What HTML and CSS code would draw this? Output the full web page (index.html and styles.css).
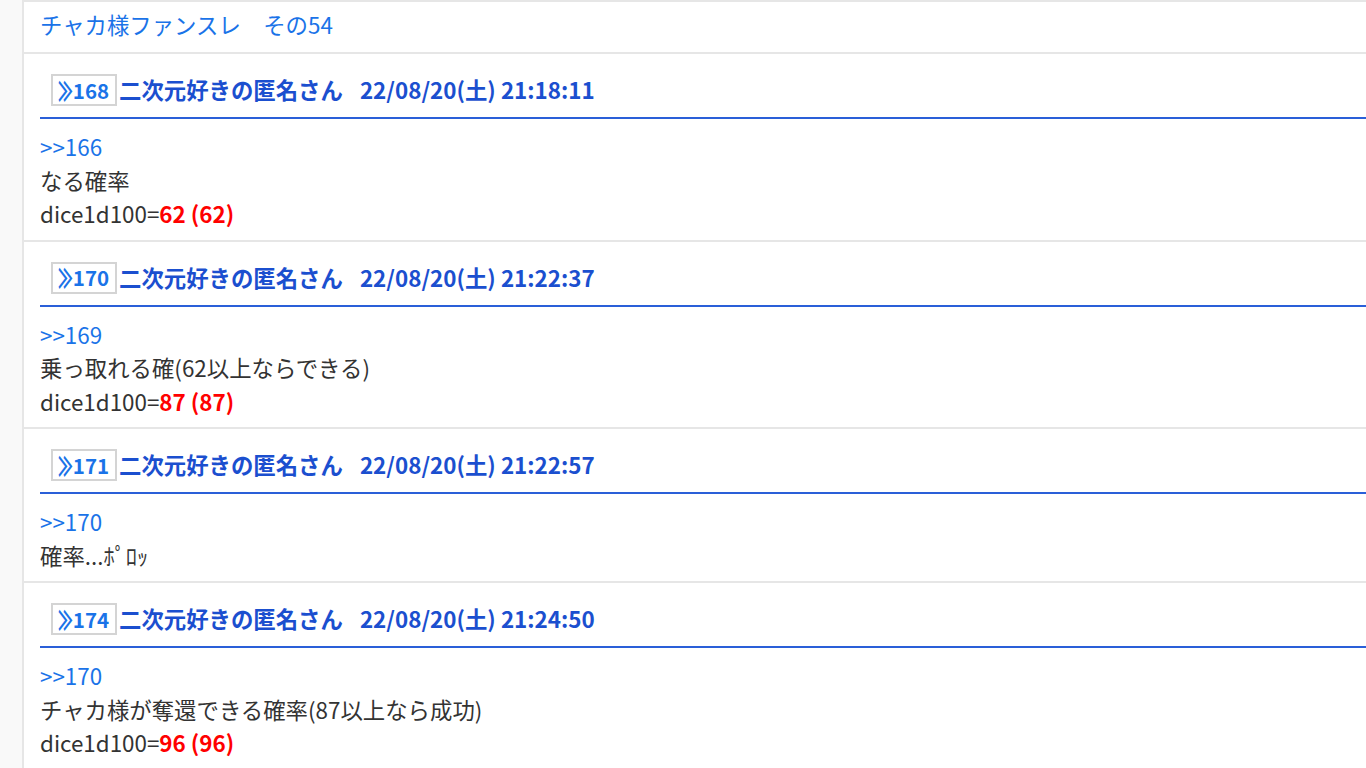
FILE: index.html
```html
<!DOCTYPE html>
<html lang="ja">
<head>
<meta charset="utf-8">
<link rel="stylesheet" href="styles.css">
</head>
<body>
<div class="page">
  <div class="thread">
    <h1 class="title">チャカ様ファンスレ　その54</h1>

    <div class="post">
      <div class="post-head"><span class="num"><span class="chev">≫</span>168</span><span class="name">二次元好きの匿名さん</span><span class="date">22/08/20(土) 21:18:11</span></div>
      <div class="post-body">
        <div class="line"><span class="anchor">&gt;&gt;166</span></div>
        <div class="line">なる確率</div>
        <div class="line">dice1d100=<span class="dice">62 (62)</span></div>
      </div>
    </div>

    <div class="post">
      <div class="post-head"><span class="num"><span class="chev">≫</span>170</span><span class="name">二次元好きの匿名さん</span><span class="date">22/08/20(土) 21:22:37</span></div>
      <div class="post-body">
        <div class="line"><span class="anchor">&gt;&gt;169</span></div>
        <div class="line">乗っ取れる確(62以上ならできる)</div>
        <div class="line">dice1d100=<span class="dice">87 (87)</span></div>
      </div>
    </div>

    <div class="post">
      <div class="post-head"><span class="num"><span class="chev">≫</span>171</span><span class="name">二次元好きの匿名さん</span><span class="date">22/08/20(土) 21:22:57</span></div>
      <div class="post-body">
        <div class="line"><span class="anchor">&gt;&gt;170</span></div>
        <div class="line">確率...ﾎﾟﾛｯ</div>
      </div>
    </div>

    <div class="post">
      <div class="post-head"><span class="num"><span class="chev">≫</span>174</span><span class="name">二次元好きの匿名さん</span><span class="date">22/08/20(土) 21:24:50</span></div>
      <div class="post-body">
        <div class="line"><span class="anchor">&gt;&gt;170</span></div>
        <div class="line">チャカ様が奪還できる確率(87以上なら成功)</div>
        <div class="line">dice1d100=<span class="dice">96 (96)</span></div>
      </div>
    </div>
  </div>
</div>
</body>
</html>
```

FILE: styles.css
```css
* { box-sizing: border-box; }
html, body {
  margin: 0;
  padding: 0;
  background: #f9f9f9;
  font-family: "Noto Sans CJK JP", "Noto Sans", sans-serif;
  color: #333;
  overflow: hidden;
}
.page {
  padding-left: 22px;
}
.thread {
  background: #fff;
  border-left: 2px solid #e6e6e6;
  border-top: 2px solid #e6e6e6;
  min-height: 768px;
}
.title {
  margin: 0;
  font-size: 22.4px;
  font-weight: normal;
  color: #1a73e8;
  line-height: 33px;
  padding: 6px 16px 9px 16px;
  border-bottom: 2px solid #e6e6e6;
  height: 52px;
}
.post {
  padding-left: 16px;
  border-bottom: 2px solid #e6e6e6;
}
.post-head {
  display: flex;
  align-items: center;
  height: 65px;
  padding: 20px 0 11px 11px;
  border-bottom: 2px solid #2a5fd8;
  font-weight: bold;
  color: #1b4fcf;
  font-size: 22.4px;
  line-height: 28px;
  white-space: nowrap;
}
.name, .date {
  padding-bottom: 2px;
}
.num {
  display: inline-flex;
  align-items: center;
  justify-content: center;
  height: 32px;
  width: 66px;
  border: 2px solid #d4d4d4;
  color: #1a73e8;
  font-size: 20.5px;
  margin-right: 2px;
  padding-bottom: 1px;
}
.chev {
  display: inline-block;
  transform: scale(0.68, 1.3);
  margin: 0 -3px 0 -4px;
  font-size: 21px;
  font-weight: 900;
}
.date {
  margin-left: 17px;
}
.post-body {
  padding: 11px 0 9px 0;
  font-size: 22.4px;
  line-height: 33.5px;
}
.anchor {
  color: #1a73e8;
}
.dice {
  color: #ff0000;
  font-weight: bold;
}
```
